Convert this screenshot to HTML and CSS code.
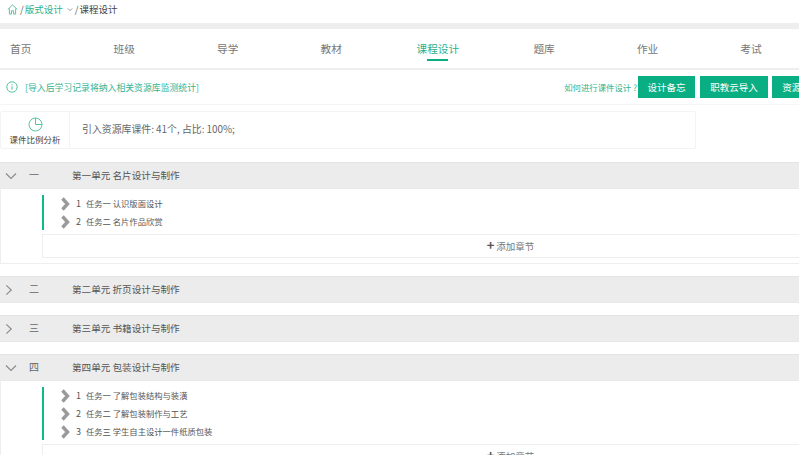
FILE: index.html
```html
<!DOCTYPE html>
<html lang="zh-CN">
<head>
<meta charset="utf-8">
<title>课程设计</title>
<link rel="stylesheet" href="styles.css">
</head>
<body>
<div class="page">
  <div class="crumb">
    <svg class="home" viewBox="0 0 12 12"><path d="M.8 6 6 1l5.200 5M2.600 5v6h2.200V7.400h2.400V11h2.200V5"/></svg>
    <span class="sep">/</span><a class="link">版式设计</a>
    <svg class="caret" viewBox="0 0 8 5"><path d="M1 1l3 3 3-3"/></svg>
    <span class="sep">/</span><span class="here">课程设计</span>
  </div>
  <nav class="nav">
    <a class="tab first">首页</a>
    <a class="tab">班级</a>
    <a class="tab">导学</a>
    <a class="tab">教材</a>
    <a class="tab active">课程设计</a>
    <a class="tab">题库</a>
    <a class="tab">作业</a>
    <a class="tab">考试</a>
  </nav>
  <div class="toolbar">
    <svg class="info" viewBox="0 0 12 12"><circle cx="6" cy="6" r="5.200"/><path d="M6 5.200v3.600M6 3v1.200"/></svg>
    <span class="note">[导入后学习记录将纳入相关资源库监测统计]</span>
    <a class="help">如何进行课件设计 ?</a>
    <a class="btn b1">设计备忘</a>
    <a class="btn b2">职教云导入</a>
    <a class="btn b3">资源库导入</a>
  </div>
  <div class="stat">
    <div class="stat-head">
      <svg class="pie" viewBox="0 0 15 15"><circle cx="7.500" cy="7.500" r="6.500"/><path d="M7.500 1v6.500H14"/></svg>
      <span>课件比例分析</span>
    </div>
    <div class="stat-body">引入资源库课件: 41个, 占比: 100%;</div>
  </div>

  <section class="unit">
    <header class="unit-head">
      <svg class="tog" viewBox="0 0 12 12"><path d="M1 3.500l5 5 5-5"/></svg>
      <span class="num">一</span><span class="name">第一单元 名片设计与制作</span>
    </header>
    <div class="unit-body">
      <ul class="tasks">
        <li><svg class="chev" viewBox="0 0 9 14"><path d="M1.500 1.500 6.500 7l-5 5.500"/></svg><span class="idx">1</span>任务一 认识版面设计</li>
        <li><svg class="chev" viewBox="0 0 9 14"><path d="M1.500 1.500 6.500 7l-5 5.500"/></svg><span class="idx">2</span>任务二 名片作品欣赏</li>
      </ul>
      <div class="add"><b class="plus">+</b>添加章节</div>
    </div>
  </section>

  <section class="unit">
    <header class="unit-head">
      <svg class="tog" viewBox="0 0 12 12"><path d="M1.300 1.300l5 4.700-5 4.700"/></svg>
      <span class="num">二</span><span class="name">第二单元 折页设计与制作</span>
    </header>
  </section>

  <section class="unit">
    <header class="unit-head">
      <svg class="tog" viewBox="0 0 12 12"><path d="M1.300 1.300l5 4.700-5 4.700"/></svg>
      <span class="num">三</span><span class="name">第三单元 书籍设计与制作</span>
    </header>
  </section>

  <section class="unit">
    <header class="unit-head">
      <svg class="tog" viewBox="0 0 12 12"><path d="M1 3.500l5 5 5-5"/></svg>
      <span class="num">四</span><span class="name">第四单元 包装设计与制作</span>
    </header>
    <div class="unit-body">
      <ul class="tasks">
        <li><svg class="chev" viewBox="0 0 9 14"><path d="M1.500 1.500 6.500 7l-5 5.500"/></svg><span class="idx">1</span>任务一 了解包装结构与装潢</li>
        <li><svg class="chev" viewBox="0 0 9 14"><path d="M1.500 1.500 6.500 7l-5 5.500"/></svg><span class="idx">2</span>任务二 了解包装制作与工艺</li>
        <li><svg class="chev" viewBox="0 0 9 14"><path d="M1.500 1.500 6.500 7l-5 5.500"/></svg><span class="idx">3</span>任务三 学生自主设计一件纸质包装</li>
      </ul>
      <div class="add"><b class="plus">+</b>添加章节</div>
    </div>
  </section>
</div>
</body>
</html>
```
FILE: styles.css
```css
* { box-sizing: border-box; }
html, body { margin: 0; height: 455px; overflow: hidden; background: #fff; }
body { font-family: "Noto Sans CJK SC", "Noto Sans", sans-serif; color: #555; }
.page { width: 980px; }
ul { list-style: none; margin: 0; padding: 0; }

.crumb { height: 23px; display: flex; align-items: center; padding: 0 0 5px 7px; font-size: 9.500px; }
.home { width: 11px; height: 11px; fill: none; stroke: #4fbf9f; stroke-width: 1; }
.sep { margin: 0 1px 0 2px; color: #666; }
.link { color: #2fb08c; }
.caret { width: 6px; height: 5px; margin-left: 4px; fill: none; stroke: #777; stroke-width: 1; }
.here { color: #444; }

.nav { height: 47px; border-top: 6px solid #eee; border-bottom: 2px solid #eee; display: flex; font-size: 10.700px; color: #777; }
.tab { position: relative; padding: 0 41.050px; line-height: 39px; white-space: nowrap; }
.tab.first { padding-left: 10px; }
.tab.active { padding: 0 33.150px 0 33.550px; color: #2bb08c; }
.tab.active::after { content: ""; position: absolute; left: 44.550px; width: 21px; height: 2px; bottom: 7px; background: #0aae83; }

.toolbar { height: 35px; border-bottom: 1px solid #f5f5f5; display: flex; align-items: center; padding: 0 140px 0 6px; font-size: 8.400px; }
.info { width: 12px; height: 12px; fill: none; stroke: #55c5a5; stroke-width: 1; margin-right: 7px; }
.note { color: #33b391; font-size: 8.860px; }
.help { margin-left: auto; color: #33b391; }
.btn { height: 22px; line-height: 22px; text-align: center; background: #0aae83; color: #fff; font-size: 9.500px; }
.b1 { width: 57px; margin-left: 1px; }
.b2 { width: 68px; margin-left: 5px; }
.b3 { width: 68px; margin-left: 4px; }

.stat { width: 696px; height: 38px; margin: 6px 0 13px; border: 1px solid #f3f3f3; border-radius: 2px; display: flex; }
.stat-head { width: 69px; border-right: 1px solid #f3f3f3; display: flex; flex-direction: column; align-items: center; padding-top: 5px; font-size: 8.500px; line-height: 12px; color: #444; }
.pie { width: 15px; height: 15px; margin-bottom: 1px; fill: none; stroke: #55c5a5; stroke-width: 1; }
.stat-body { padding-left: 12px; line-height: 35px; font-size: 9.900px; color: #666; }

.unit { margin-bottom: 12px; }
.unit-head { height: 27px; background: #ececec; border-top: 1px solid #e4e4e4; border-bottom: 1px solid #e8e8e8; display: flex; align-items: center; font-size: 10px; color: #555; }
.tog { width: 12px; height: 12px; margin-left: 5px; fill: none; stroke: #888; stroke-width: 1.100; }
.num { width: 55px; padding: 0 0 2px 12px; color: #666; }
.name { white-space: nowrap; font-size: 9.600px; padding-bottom: 2px; }
.unit-body { border: 1px solid #eee; border-top: 0; padding: 6px 0 5px 41px; }
.tasks { height: 35px; border-left: 2px solid #10b98c; padding-left: 17px; }
.unit:last-child .tasks { height: 53px; }
.tasks li { height: 18px; padding-bottom: 2px; display: flex; align-items: center; font-size: 8.300px; color: #555; white-space: nowrap; }
.chev { width: 9px; height: 14px; margin: 2px 6px 0 0; overflow: visible; fill: none; stroke: #9a9a9a; stroke-width: 3.400; }
.idx { width: 10px; font-size: 9px; }
.add { height: 24px; margin-top: 4px; border: 1px solid #eee; border-right: 0; text-align: center; line-height: 19px; font-size: 9.500px; color: #777; }
.plus { color: #555; margin-right: 1px; font-size: 13px; position: relative; left: -1px; }
```
